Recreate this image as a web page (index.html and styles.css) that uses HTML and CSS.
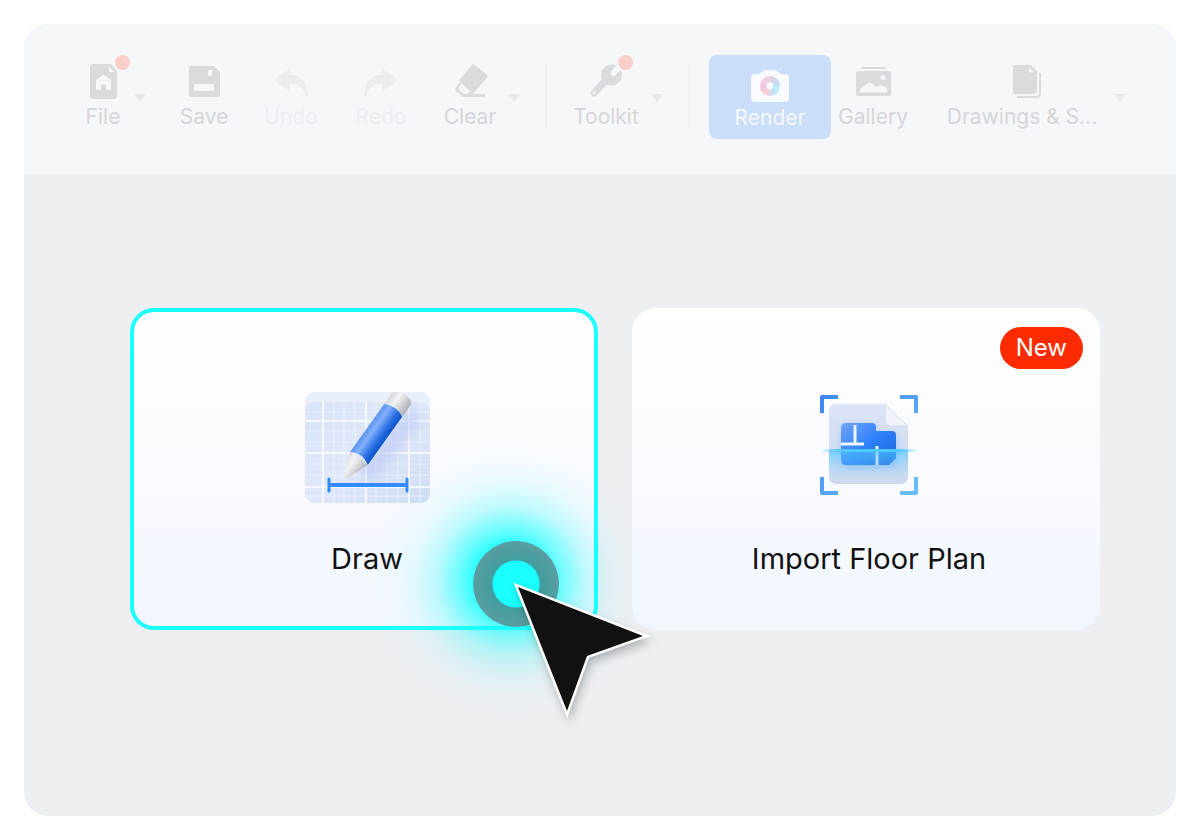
FILE: index.html
```
<!DOCTYPE html>
<html lang="en">
<head>
    <meta charset="UTF-8">
    <meta name="viewport" content="width=device-width, initial-scale=1.0">
    <title>Floor Plan Editor</title>
    <link rel="stylesheet" href="styles.css">
</head>
<body>
    <div class="app">
        <header class="toolbar">
            <button class="tool">
                <svg class="icon" viewBox="0 0 36 36"><path fill-rule="evenodd" d="M8 1H26L32 8V33Q32 36 29 36H8Q5 36 5 33V4Q5 1 8 1ZM24 4V9H30ZM18.500 11.500L11 17V27H16V23Q16 21 18.500 21T21 23V27H26V17Z"/></svg>
                <span>File</span>
                <span class="dot"></span>
            </button>
            <button class="caret" aria-label="File options"></button>
            <button class="tool">
                <svg class="icon" viewBox="0 0 36 36"><path fill-rule="evenodd" d="M5 3H28L34 9V32Q34 34 32 34H5Q3 34 3 32V5Q3 3 5 3ZM22 7V13H26V7ZM8 21V28H28V21Z"/></svg>
                <span>Save</span>
            </button>
            <button class="tool" disabled>
                <svg class="icon" viewBox="0 0 36 36"><path d="M1.500 17L16.700 4.700V11.700C28 12 35 20 34.700 32.700H32.500C31 25 26 20.700 16.700 20.700V29Z"/></svg>
                <span>Undo</span>
            </button>
            <button class="tool" disabled>
                <svg class="icon" viewBox="0 0 36 36"><path d="M34.500 17L19.300 4.700V11.700C8 12 1 20 1.300 32.700H3.500C5 25 10 20.700 19.300 20.700V29Z"/></svg>
                <span>Redo</span>
            </button>
            <button class="tool">
                <svg class="icon" viewBox="0 0 36 36"><path fill-rule="evenodd" d="M20 2Q21.500 .5 23 2L34.500 11.500Q36 13 35 14.500L21 31H33V34H11L4.500 28.500Q2.500 26.500 4 24L8 19L7.500 17ZM9.500 20.500L6.500 25Q6 26.500 7.500 27.500L12 31H15.500L18.500 28Z"/></svg>
                <span>Clear</span>
            </button>
            <button class="caret" aria-label="Clear options"></button>
            <div class="divider"></div>
            <button class="tool">
                <svg class="icon" viewBox="0 0 36 36">
                    <path d="M20 15L6 30" fill="none" stroke="#d9dbdf" stroke-width="7" stroke-linecap="round"/>
                    <circle cx="23.500" cy="12" r="10.500"/>
                    <path d="M35 0L25.500 10" fill="none" stroke="#f5f7fa" stroke-width="6" stroke-linecap="round"/>
                    <circle cx="6" cy="30" r="1.500" fill="#f5f7fa"/>
                </svg>
                <span>Toolkit</span>
                <span class="dot"></span>
            </button>
            <button class="caret" aria-label="Toolkit options"></button>
            <div class="divider"></div>
            <button class="tool render">
                <span class="camera">
                    <svg viewBox="0 0 38 32" width="38" height="32"><path d="M4 4H8L12 1Q13 0 14 0H24Q25 0 26 1L30 4H34Q38 4 38 8V28Q38 32 34 32H4Q0 32 0 28V8Q0 4 4 4Z" fill="#f8fafd"/></svg>
                    <span class="lens"></span>
                </span>
                <span>Render</span>
            </button>
            <button class="tool">
                <svg class="icon" viewBox="0 0 36 36"><path fill-rule="evenodd" d="M7 4H30L32 6H5ZM4 8H33Q36 8 36 11V30Q36 33 33 33H4Q1 33 1 30V11Q1 8 4 8ZM5 29.500H32V26Q29 22.500 26.500 22.500Q24 22 22 24Q20 24 17.500 21Q14.500 18 12 21L5 26ZM30.500 14.500A2.500 2.500 0 1 0 25.500 14.500A2.500 2.500 0 1 0 30.500 14.500Z"/></svg>
                <span>Gallery</span>
            </button>
            <button class="tool drawings">
                <svg class="icon" viewBox="0 0 36 36">
                    <path fill-rule="evenodd" d="M11 2H27L33 8V28Q33 31 30 31H11Q9 31 9 28V4Q9 2 11 2ZM25 4.500V9.500H30.500Z"/>
                    <path d="M13 34H32Q36 34 36 30V10" fill="none" stroke="#d9dbdf" stroke-width="2"/>
                </svg>
                <span>Drawings &amp; S...</span>
            </button>
            <button class="caret" aria-label="Drawings options"></button>
        </header>

        <main class="start">
            <div class="slot">
                <button class="card selected">
                    <svg class="picture" viewBox="0 0 125 112">
                        <defs>
                            <linearGradient id="sheet" x1="0" y1="0" x2="1" y2="1"><stop offset="0" stop-color="#d9e4f8"/><stop offset=".5" stop-color="#dfe8f9"/><stop offset="1" stop-color="#cfdcf4"/></linearGradient>
                            <linearGradient id="barrel" x1="0" x2="1"><stop offset="0" stop-color="#5d94f0"/><stop offset=".3" stop-color="#82b0fb"/><stop offset=".7" stop-color="#2a70e4"/><stop offset="1" stop-color="#0b53c8"/></linearGradient>
                            <linearGradient id="metal" x1="0" x2="1"><stop offset="0" stop-color="#d4d6da"/><stop offset=".35" stop-color="#f3f4f5"/><stop offset="1" stop-color="#adb1b9"/></linearGradient>
                            <filter id="soft" x="-50%" y="-50%" width="200%" height="200%"><feGaussianBlur stdDeviation="6"/></filter>
                            <clipPath id="page"><rect y="10" width="125" height="101" rx="9"/></clipPath>
                        </defs>
                        <rect width="125" height="60" rx="9" fill="#e9effb"/>
                        <rect y="10" width="125" height="101" rx="9" fill="url(#sheet)"/>
                        <g clip-path="url(#page)">
                            <path d="M29 10V111M39 10V111M50 10V111M71 10V111M82 10V111M93 10V111M115 10V111M0 20H125M0 39H125M0 50H125M0 72H125M0 83H125M0 104H125" stroke="#e9f0fc" stroke-width="1"/>
                            <path d="M18 10V111M61 10V111M104 10V111M0 29H125M0 61H125M0 95H125" stroke="#f5f8ff" stroke-width="2"/>
                            <path d="M110 20L60 84" stroke="#aabaf2" stroke-width="20" opacity=".45" filter="url(#soft)"/>
                        </g>
                        <path d="M24 93H102" stroke="#348bff" stroke-width="4"/>
                        <path d="M24 87V99M102 87V99" stroke="#348bff" stroke-width="3" stroke-linecap="round"/>
                        <g transform="translate(40 86) rotate(35.500)">
                            <path d="M-11 -24L-2 -1Q0 1 2 -1L11 -24Z" fill="url(#metal)"/>
                            <path d="M-11 -84V-97Q-11 -100 -7 -102Q0 -104 7 -102Q11 -100 11 -97V-84Z" fill="url(#metal)"/>
                            <path d="M-11 -24V-83Q0 -89 11 -83V-24Q0 -31 -11 -24Z" fill="url(#barrel)"/>
                        </g>
                    </svg>
                    <span class="label">Draw</span>
                </button>
                <div class="pointer">
                    <div class="glow"></div>
                    <div class="ring"></div>
                    <svg class="arrow" viewBox="0 0 140 145" width="140" height="145"><path d="M6 7L131 56L75 76L55 131Z" fill="#111" stroke="#fff" stroke-width="5" paint-order="stroke" stroke-miterlimit="10"/></svg>
                </div>
            </div>
            <div class="slot">
                <button class="card">
                    <svg class="picture" viewBox="0 0 98 112">
                        <defs>
                            <linearGradient id="corner" x1="0" y1="0" x2="1" y2="1"><stop offset="0" stop-color="#3d86f1"/><stop offset="1" stop-color="#6bbcff"/></linearGradient>
                            <linearGradient id="paper" x1="0" y1="0" x2="0" y2="1"><stop offset="0" stop-color="#dce5f7"/><stop offset="1" stop-color="#ccd9ef"/></linearGradient>
                            <linearGradient id="rooms" x1="0" y1="0" x2="1" y2="1"><stop offset="0" stop-color="#70a5fb"/><stop offset=".5" stop-color="#2e80fa"/><stop offset="1" stop-color="#1764d8"/></linearGradient>
                            <linearGradient id="scan" x1="0" y1="0" x2="0" y2="1"><stop offset="0" stop-color="#49c5ff" stop-opacity=".65"/><stop offset="1" stop-color="#8dcfff" stop-opacity="0"/></linearGradient>
                            <linearGradient id="beam" x1="0" x2="1"><stop offset="0" stop-color="#50c9ff" stop-opacity="0"/><stop offset=".2" stop-color="#50c9ff"/><stop offset=".8" stop-color="#50c9ff"/><stop offset="1" stop-color="#50c9ff" stop-opacity="0"/></linearGradient>
                            <filter id="haze" x="-30%" y="-30%" width="160%" height="160%"><feGaussianBlur stdDeviation="4"/></filter>
                        </defs>
                        <path d="M2 21V5H18M80 5H96V21M2 85V101H18M80 101H96V85" fill="none" stroke="url(#corner)" stroke-width="4" stroke-linejoin="round"/>
                        <path d="M16 12H65L88 34V84Q88 92 80 92H17Q9 92 9 84V20Q9 12 16 12Z" fill="url(#paper)"/>
                        <path d="M65 12L88 34H72Q65 34 65 27Z" fill="#f0f3fa" stroke="#d6deef" stroke-width="1"/>
                        <path d="M22 34H54V43H76V75H22Z" fill="#6da8fb" opacity=".55" filter="url(#haze)"/>
                        <path d="M26 31H52Q56 31 56 35V39H72Q76 39 76 43V66L69 73H26Q21 73 21 68V36Q21 31 26 31Z" fill="url(#rooms)"/>
                        <path d="M35 33V51M21 52H44M57 54V73" fill="none" stroke="#edf5ff" stroke-width="3"/>
                        <rect x="9" y="59" width="79" height="28" fill="url(#scan)"/>
                        <rect y="57" width="98" height="3" fill="url(#beam)"/>
                    </svg>
                    <span class="label">Import Floor Plan</span>
                    <span class="badge">New</span>
                </button>
            </div>
        </main>
    </div>
</body>
</html>
```

FILE: styles.css
```
* {
    box-sizing: border-box;
}
body {
    margin: 0;
    padding: 24px;
    background: #fff;
    font-family: "Inter", "Liberation Sans", sans-serif;
}
button {
    font-family: inherit;
    border: none;
    background: none;
    padding: 0;
    cursor: pointer;
}
.app {
    min-height: calc(100vh - 48px);
    background: #edeff3;
    border-radius: 24px;
    overflow: hidden;
}

/* Toolbar */
.toolbar {
    display: grid;
    grid-template-columns: 54fr 20fr 108fr 66fr 114fr 64fr 24fr 40fr 80fr 22fr 41fr 122fr 84fr 190fr 30fr;
    padding: 31px 41px 35px 52px;
    background: #f5f7fa;
}
.tool {
    position: relative;
    display: flex;
    flex-direction: column;
    align-items: center;
    gap: 4px;
    min-width: 0;
    height: 84px;
    padding-top: 8px;
    color: #d5d6d9;
    font-size: 21px;
    line-height: 28px;
    white-space: nowrap;
}
.tool:disabled {
    color: #eceef2;
}
.icon {
    width: 36px;
    height: 36px;
    flex: none;
    fill: #d9dbdf;
    overflow: visible;
}
.tool:disabled .icon {
    fill: #eaecf0;
}
.dot {
    position: absolute;
    top: 0;
    left: calc(50% + 12px);
    width: 15px;
    height: 15px;
    border-radius: 50%;
    background: #f9cdc8;
}
.caret {
    display: flex;
    justify-content: center;
    min-width: 0;
    padding-top: 39px;
    align-self: start;
}
.caret::before {
    content: "";
    border: 6px solid transparent;
    border-top: 8px solid #e6e8ec;
    border-bottom: none;
}
.divider {
    justify-self: center;
    width: 2px;
    height: 66px;
    margin-top: 9px;
    background: #f0f2f5;
}
.render {
    padding-top: 15px;
    gap: 2px;
    border-radius: 8px;
    background: #cadef9;
    color: #f5f9ff;
}
.drawings {
    padding-left: 24px;
}
.camera {
    position: relative;
    height: 32px;
}
.lens {
    position: absolute;
    top: 6px;
    left: 9px;
    width: 20px;
    height: 20px;
    border-radius: 50%;
    background: radial-gradient(circle, #f8fafd 3px, transparent 4px), conic-gradient(#e4d0e0, #c9daf3 60deg, #b6effa 110deg, #cbdcf6 160deg, #f7d2d3 205deg, #f3c3dc 260deg, #f3cfe5 310deg, #e4d0e0);
}

/* Start cards */
.start {
    display: grid;
    grid-template-columns: 1fr 1fr;
    gap: 34px;
    padding: 134px 76px 40px 106px;
}
.slot {
    position: relative;
}
.card {
    position: relative;
    display: flex;
    flex-direction: column;
    align-items: center;
    gap: 35px;
    width: 100%;
    padding: 84px 0 51px 6px;
    border-radius: 24px;
    background: linear-gradient(#fff, #f1f6ff);
    color: #111;
}
.selected {
    box-shadow: inset 0 0 0 4px #1affff;
}
.picture {
    height: 112px;
}
.label {
    font-size: 29px;
    line-height: 40px;
}
.badge {
    position: absolute;
    top: 19px;
    right: 17px;
    padding: 0 16px;
    border-radius: 21px;
    background: #ff2b00;
    color: #fff;
    font-size: 24px;
    line-height: 42px;
}

/* Pointer with click highlight */
.pointer {
    position: absolute;
    right: 82px;
    bottom: 46px;
    z-index: 1;
    pointer-events: none;
}
.glow {
    position: absolute;
    top: -144px;
    left: -146px;
    width: 280px;
    height: 280px;
    background: radial-gradient(circle, rgba(26, 255, 255, 1) 32px, rgba(26, 255, 255, 0.6) 52px, rgba(26, 255, 255, 0.25) 74px, rgba(26, 255, 255, 0.08) 96px, rgba(26, 255, 255, 0.02) 116px, rgba(26, 255, 255, 0) 136px);
}
.ring {
    position: absolute;
    top: -43px;
    left: -43px;
    width: 86px;
    height: 86px;
    border-radius: 50%;
    background: radial-gradient(circle, #1affff 23px, #419ea0 24px, #5a9da0 43px);
}
.arrow {
    position: absolute;
    top: -4px;
    left: -4px;
    filter: drop-shadow(2px 5px 5px rgba(0, 0, 0, 0.25));
}
```
